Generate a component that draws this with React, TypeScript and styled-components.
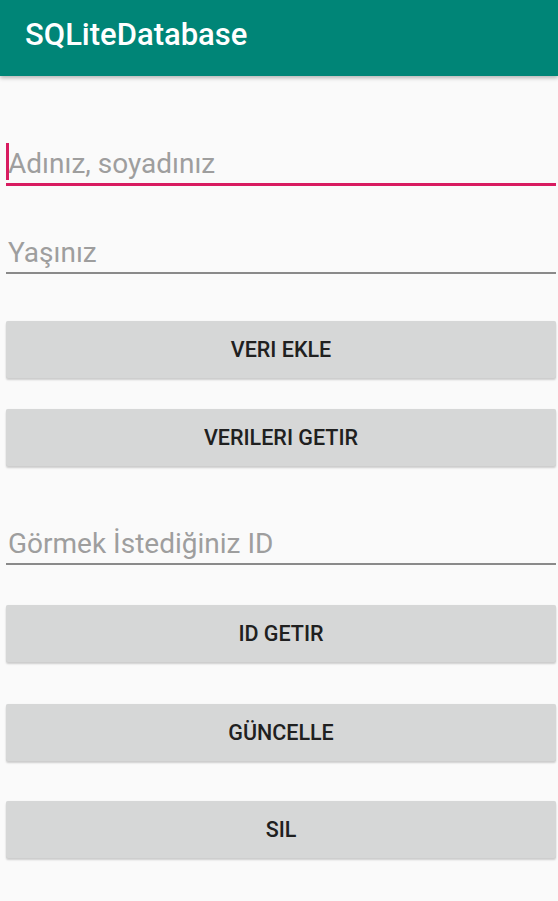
import React from "react";
import styled, { createGlobalStyle } from "styled-components";

const Global = createGlobalStyle`
  html, body { margin: 0; padding: 0; background: #fafafa; }
  body { font-family: Roboto, "Noto Sans", sans-serif; }
  #root { min-height: 901px; background: #fafafa; }
`;

const Screen = styled.div`
  width: 558px;
  min-height: 901px;
  background: #fafafa;
  display: flex;
  flex-direction: column;
`;

const AppBar = styled.header`
  height: 76px;
  background: #008577;
  display: flex;
  align-items: center;
  padding-left: 25px;
  box-shadow: 0 2px 4px rgba(0, 0, 0, 0.28);
  position: relative;
  z-index: 1;
`;

const Title = styled.h1`
  margin: 0;
  color: #ffffff;
  font-family: Roboto, sans-serif;
  font-weight: 500;
  font-size: 31px;
  line-height: 36px;
  margin-top: -6px;
`;

const Content = styled.main`
  display: flex;
  flex-direction: column;
  padding: 0 2px 0 6px;
`;

const Field = styled.label<{ $mt: number; $focused?: boolean }>`
  position: relative;
  display: block;
  margin-top: ${(p) => p.$mt}px;
  padding: 0 0 3px 2px;
  border-bottom: ${(p) => (p.$focused ? "3px solid #D81B60" : "2px solid #8a8a8a")};
`;

const Placeholder = styled.span`
  display: block;
  font-family: Roboto, sans-serif;
  font-size: 28px;
  line-height: 32px;
  color: #9e9e9e;
  white-space: nowrap;
`;

const Cursor = styled.span`
  position: absolute;
  left: 0;
  top: -5px;
  width: 3px;
  height: 37px;
  background: #D81B60;
`;

const Button = styled.button<{ $mt: number }>`
  margin-top: ${(p) => p.$mt}px;
  height: 57px;
  width: 550px;
  border: none;
  border-radius: 2px;
  background: #d6d7d7;
  box-shadow: 0 2px 2px rgba(0, 0, 0, 0.18), 0 0 1px rgba(0, 0, 0, 0.08);
  font-family: Roboto, sans-serif;
  font-weight: 500;
  font-size: 21.5px;
  letter-spacing: 0;
  color: #202020;
  text-transform: uppercase;
  padding: 0;
  cursor: pointer;
`;

export default function App() {
  return (
    <Screen>
      <Global />
      <AppBar>
        <Title>SQLiteDatabase</Title>
      </AppBar>
      <Content>
        <Field $mt={72} $focused>
          <Cursor />
          <Placeholder>Adınız, soyadınız</Placeholder>
        </Field>
        <Field $mt={51}>
          <Placeholder>Yaşınız</Placeholder>
        </Field>
        <Button $mt={47}>VERI EKLE</Button>
        <Button $mt={31}>VERILERI GETIR</Button>
        <Field $mt={62}>
          <Placeholder>Görmek İstediğiniz ID</Placeholder>
        </Field>
        <Button $mt={40}>ID GETIR</Button>
        <Button $mt={42}>GÜNCELLE</Button>
        <Button $mt={40}>SIL</Button>
      </Content>
    </Screen>
  );
}
